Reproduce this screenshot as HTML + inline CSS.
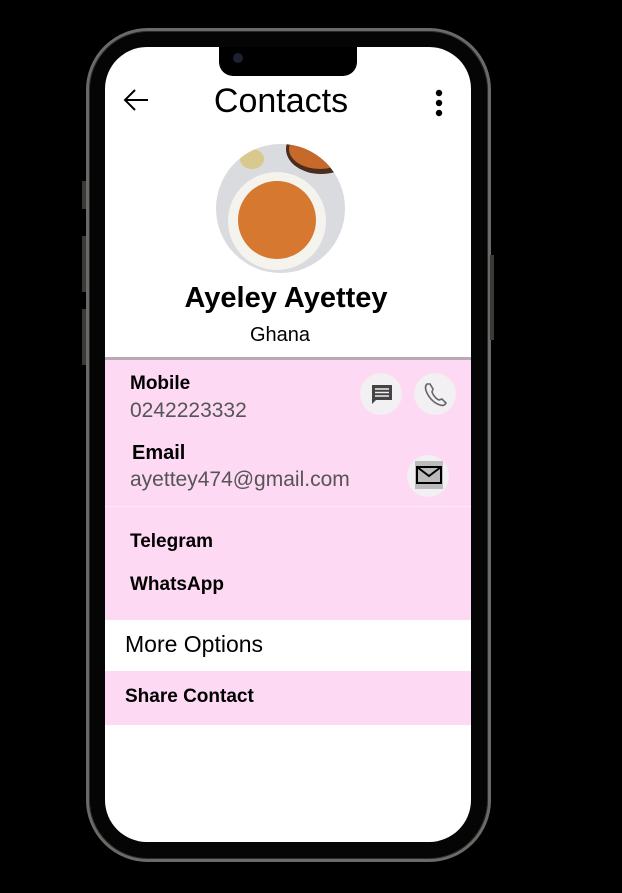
<!DOCTYPE html>
<html><head><style>
*{margin:0;padding:0;box-sizing:border-box}
body{width:622px;height:893px;background:#000;position:relative;overflow:hidden;font-family:"Liberation Sans",sans-serif}
.frame{position:absolute;left:86px;top:28px;width:405px;height:834px;border-radius:62px;border:3px solid #6b6a66;background:#050505;box-shadow:inset 0 0 0 1px #2a2a2a}
.btn{position:absolute;background:#3a3a38;width:4px;left:82px}
.screen{position:absolute;left:105px;top:47px;width:366px;height:795px;border-radius:42px;background:#fff;overflow:hidden}
.notch{position:absolute;left:114px;top:0;width:138px;height:29px;background:#000;border-radius:0 0 14px 14px}
.abs{position:absolute;white-space:nowrap}
.pink{background:#fdd9f3}
.b{font-weight:bold;color:#000}
.g{color:#555}
.circ{position:absolute;width:42px;height:42px;border-radius:50%;background:#f2f0f2}
</style></head><body>
<div class="frame"></div>
<div class="btn" style="top:181px;height:28px"></div>
<div class="btn" style="top:236px;height:56px"></div>
<div class="btn" style="top:309px;height:56px"></div>
<div class="btn" style="left:490px;top:255px;height:85px"></div>
<div class="screen">
 <div class="notch"><div style="position:absolute;left:14px;top:6px;width:10px;height:10px;border-radius:50%;background:#1a2230"></div></div>
 <svg class="abs" style="left:17px;top:41px" width="28" height="24" viewBox="0 0 28 24"><path d="M26 12H3M13 2L3 12l10 10" fill="none" stroke="#000" stroke-width="2"/></svg>
 <div class="abs" style="left:0;width:352px;top:35px;text-align:center;font-size:34px;color:#000">Contacts</div>
 <svg class="abs" style="left:328px;top:42px" width="12" height="30"><circle cx="6" cy="4" r="3.2"/><circle cx="6" cy="14" r="3.2"/><circle cx="6" cy="24" r="3.2"/></svg>
 <div class="abs" style="left:111px;top:97px;width:129px;height:129px;border-radius:50%;overflow:hidden;background:#d9dbde">
  <div class="abs" style="left:12px;top:28px;width:98px;height:98px;border-radius:50%;background:#f5f3ee"></div>
  <div class="abs" style="left:22px;top:37px;width:78px;height:78px;border-radius:50%;background:#d6782f"></div>
  <div class="abs" style="left:70px;top:-20px;width:70px;height:50px;border-radius:50%;background:#4a2d1c"></div>
  <div class="abs" style="left:73px;top:-15px;width:62px;height:40px;border-radius:50%;background:#c8692c"></div>
  <div class="abs" style="left:24px;top:5px;width:24px;height:20px;border-radius:50%;background:#d9c98f"></div>
 </div>
 <div class="abs b" style="left:0;width:362px;top:235px;text-align:center;font-size:29px">Ayeley Ayettey</div>
 <div class="abs" style="left:0;width:350px;top:277px;text-align:center;font-size:20px;color:#000">Ghana</div>
 <div class="abs pink" style="left:0;top:310px;width:366px;height:263px;border-top:3px solid #b9a9b5"></div>
 <div class="abs" style="left:0;top:459px;width:366px;height:1px;background:#fbeaf6"></div>
 <div class="abs b" style="left:25px;top:326px;font-size:19px">Mobile</div>
 <div class="abs g" style="left:25px;top:352px;font-size:21px">0242223332</div>
 <div class="abs b" style="left:27px;top:395px;font-size:20px">Email</div>
 <div class="abs g" style="left:25px;top:421px;font-size:21px">ayettey474@gmail.com</div>
 <div class="circ" style="left:255px;top:326px"><svg width="42" height="42"><path d="M12 12h20v15H16l-4 4z" fill="#444"/><path d="M15 16h14M15 19.5h14M15 23h14" stroke="#f2f0f2" stroke-width="1.5"/></svg></div>
 <div class="circ" style="left:309px;top:326px"><svg width="42" height="42"><path d="M13 11c-2 2-2 5 0 9 3 6 7 10 13 12 3 1 5 0 6-2l-4-4c-1 0-2 1-3 1-3-1-6-5-7-8 0-1 1-2 1-3l-3-5z" fill="none" stroke="#666" stroke-width="1.6"/></svg></div>
 <div class="circ" style="left:302px;top:408px"><svg width="42" height="42"><rect x="8" y="6" width="28" height="28" fill="#bbb"/><rect x="10" y="12" width="24" height="16" fill="none" stroke="#000" stroke-width="2"/><path d="M10 12l12 9 12-9" fill="none" stroke="#000" stroke-width="2"/></svg></div>
 <div class="abs b" style="left:25px;top:484px;font-size:19px">Telegram</div>
 <div class="abs b" style="left:25px;top:527px;font-size:19px">WhatsApp</div>
 <div class="abs" style="left:20px;top:584px;font-size:23px;color:#000">More Options</div>
 <div class="abs pink" style="left:0;top:624px;width:366px;height:54px"></div>
 <div class="abs b" style="left:20px;top:639px;font-size:19px">Share Contact</div>
</div>
</body></html>
